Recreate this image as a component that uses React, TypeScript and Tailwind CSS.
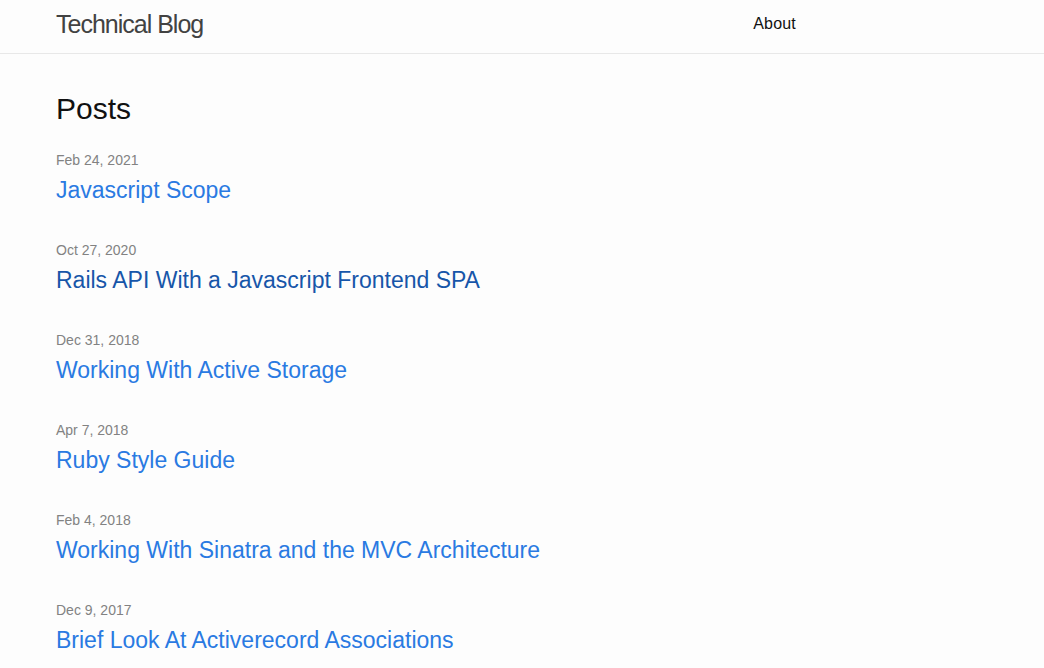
const posts = [
  { date: 'Feb 24, 2021', title: 'Javascript Scope', visited: false },
  { date: 'Oct 27, 2020', title: 'Rails API With a Javascript Frontend SPA', visited: true },
  { date: 'Dec 31, 2018', title: 'Working With Active Storage', visited: false },
  { date: 'Apr 7, 2018', title: 'Ruby Style Guide', visited: false },
  { date: 'Feb 4, 2018', title: 'Working With Sinatra and the MVC Architecture', visited: false },
  { date: 'Dec 9, 2017', title: 'Brief Look At Activerecord Associations', visited: false },
];

export default function App() {
  return (
    <div className="min-h-[668px] bg-[#fdfdfd] text-[#111] font-['Liberation_Sans','Helvetica',sans-serif]">
      <header className="h-[54px] border-b border-[#e8e8e8]">
        <div className="w-[740px] ml-[56px] flex items-center justify-between h-[48px]">
          <a href="#" className="text-[25px] font-light tracking-[-1px] text-[#424242] leading-[48px]">
            Technical Blog
          </a>
          <nav>
            <a href="#" className="text-[16px] tracking-[0.2px] text-[#111] leading-[48px]">About</a>
          </nav>
        </div>
      </header>

      <main className="w-[740px] ml-[56px] pt-[34px]">
        <h2 className="text-[30px] leading-[42px] mb-[20px]">Posts</h2>
        <ul>
          {posts.map((p) => (
            <li key={p.title} className="mb-[32px]">
              <div className="text-[14px] leading-[21px] text-[#828282]">{p.date}</div>
              <h3 className="mt-[1px] text-[23px] leading-[36px]">
                <a href="#" className={p.visited ? 'text-[#1756a9]' : 'text-[#2a7ae2]'}>
                  {p.title}
                </a>
              </h3>
            </li>
          ))}
        </ul>
      </main>
    </div>
  );
}
